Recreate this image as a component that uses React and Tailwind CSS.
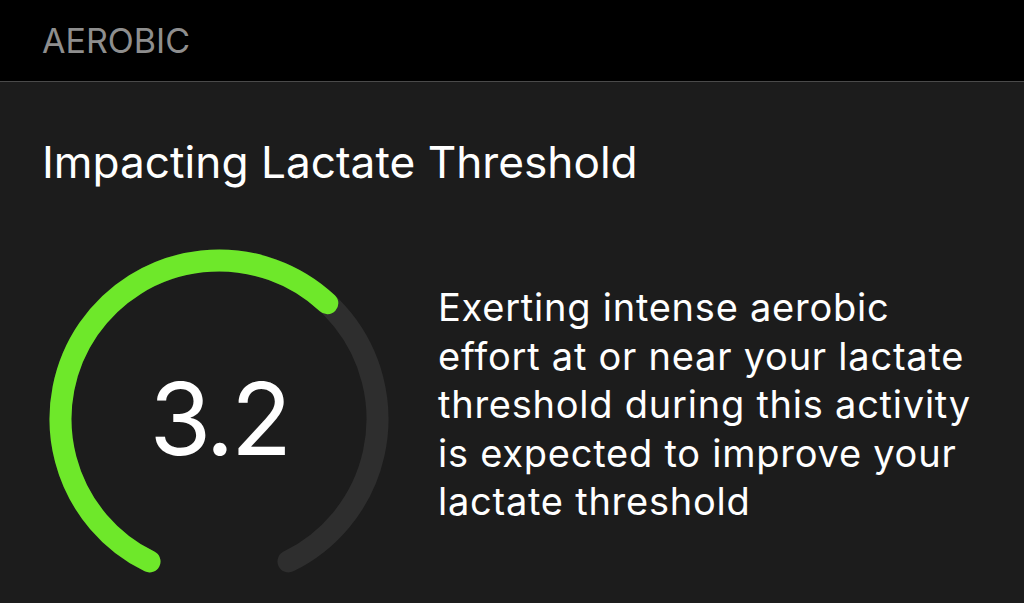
import React from "react";

const point = (cx, cy, r, deg) => {
  const a = (deg * Math.PI) / 180;
  return [cx + r * Math.sin(a), cy - r * Math.cos(a)];
};

const arc = (cx, cy, r, from, to) => {
  const [x1, y1] = point(cx, cy, r, from);
  const [x2, y2] = point(cx, cy, r, to);
  let sweep = to - from;
  if (sweep < 0) sweep += 360;
  const large = sweep > 180 ? 1 : 0;
  return `M ${x1} ${y1} A ${r} ${r} 0 ${large} 1 ${x2} ${y2}`;
};

const Gauge = ({ value, max = 5 }) => {
  const size = 340;
  const c = size / 2;
  const r = 158.5;
  const start = 206;
  const span = 308;
  const end = start + span;
  const valueEnd = start + (span * value) / max;

  return (
    <div className="relative w-[340px] h-[340px] shrink-0">
      <svg width={size} height={size} viewBox={`0 0 ${size} ${size}`}>
        <path
          d={arc(c, c, r, start, end % 360)}
          fill="none"
          stroke="#2e2e2e"
          strokeWidth="22"
          strokeLinecap="round"
        />
        <path
          d={arc(c, c, r, start, valueEnd % 360)}
          fill="none"
          stroke="#6ee82a"
          strokeWidth="22"
          strokeLinecap="round"
        />
      </svg>
      <div className="absolute inset-0 flex items-center justify-center text-white text-[100px] leading-none tracking-[-0.035em]">
        {value}
      </div>
    </div>
  );
};

const App = () => {
  return (
    <div className="w-[1024px] h-[603px] bg-[#1c1c1c] overflow-hidden font-['Inter',sans-serif]">
      <div className="h-[82px] bg-black border-b border-[#4a4a4a] flex items-center px-[42px]">
        <span className="text-[#8e8e8e] text-[34px]">AEROBIC</span>
      </div>
      <div className="pl-[42px]">
        <h1 className="text-white text-[44.2px] leading-none pt-[58px]">
          Impacting Lactate Threshold
        </h1>
        <div className="flex items-start mt-[65px]">
          <div className="ml-[7px]">
            <Gauge value={3.2} />
          </div>
          <p className="ml-[49px] mt-[34px] w-[580px] text-white text-[38px] leading-[48.5px] tracking-[0.02em]">
            Exerting intense aerobic
            <br />
            effort at or near your lactate
            <br />
            threshold during this activity
            <br />
            is expected to improve your
            <br />
            lactate threshold
          </p>
        </div>
      </div>
    </div>
  );
};

export default App;
